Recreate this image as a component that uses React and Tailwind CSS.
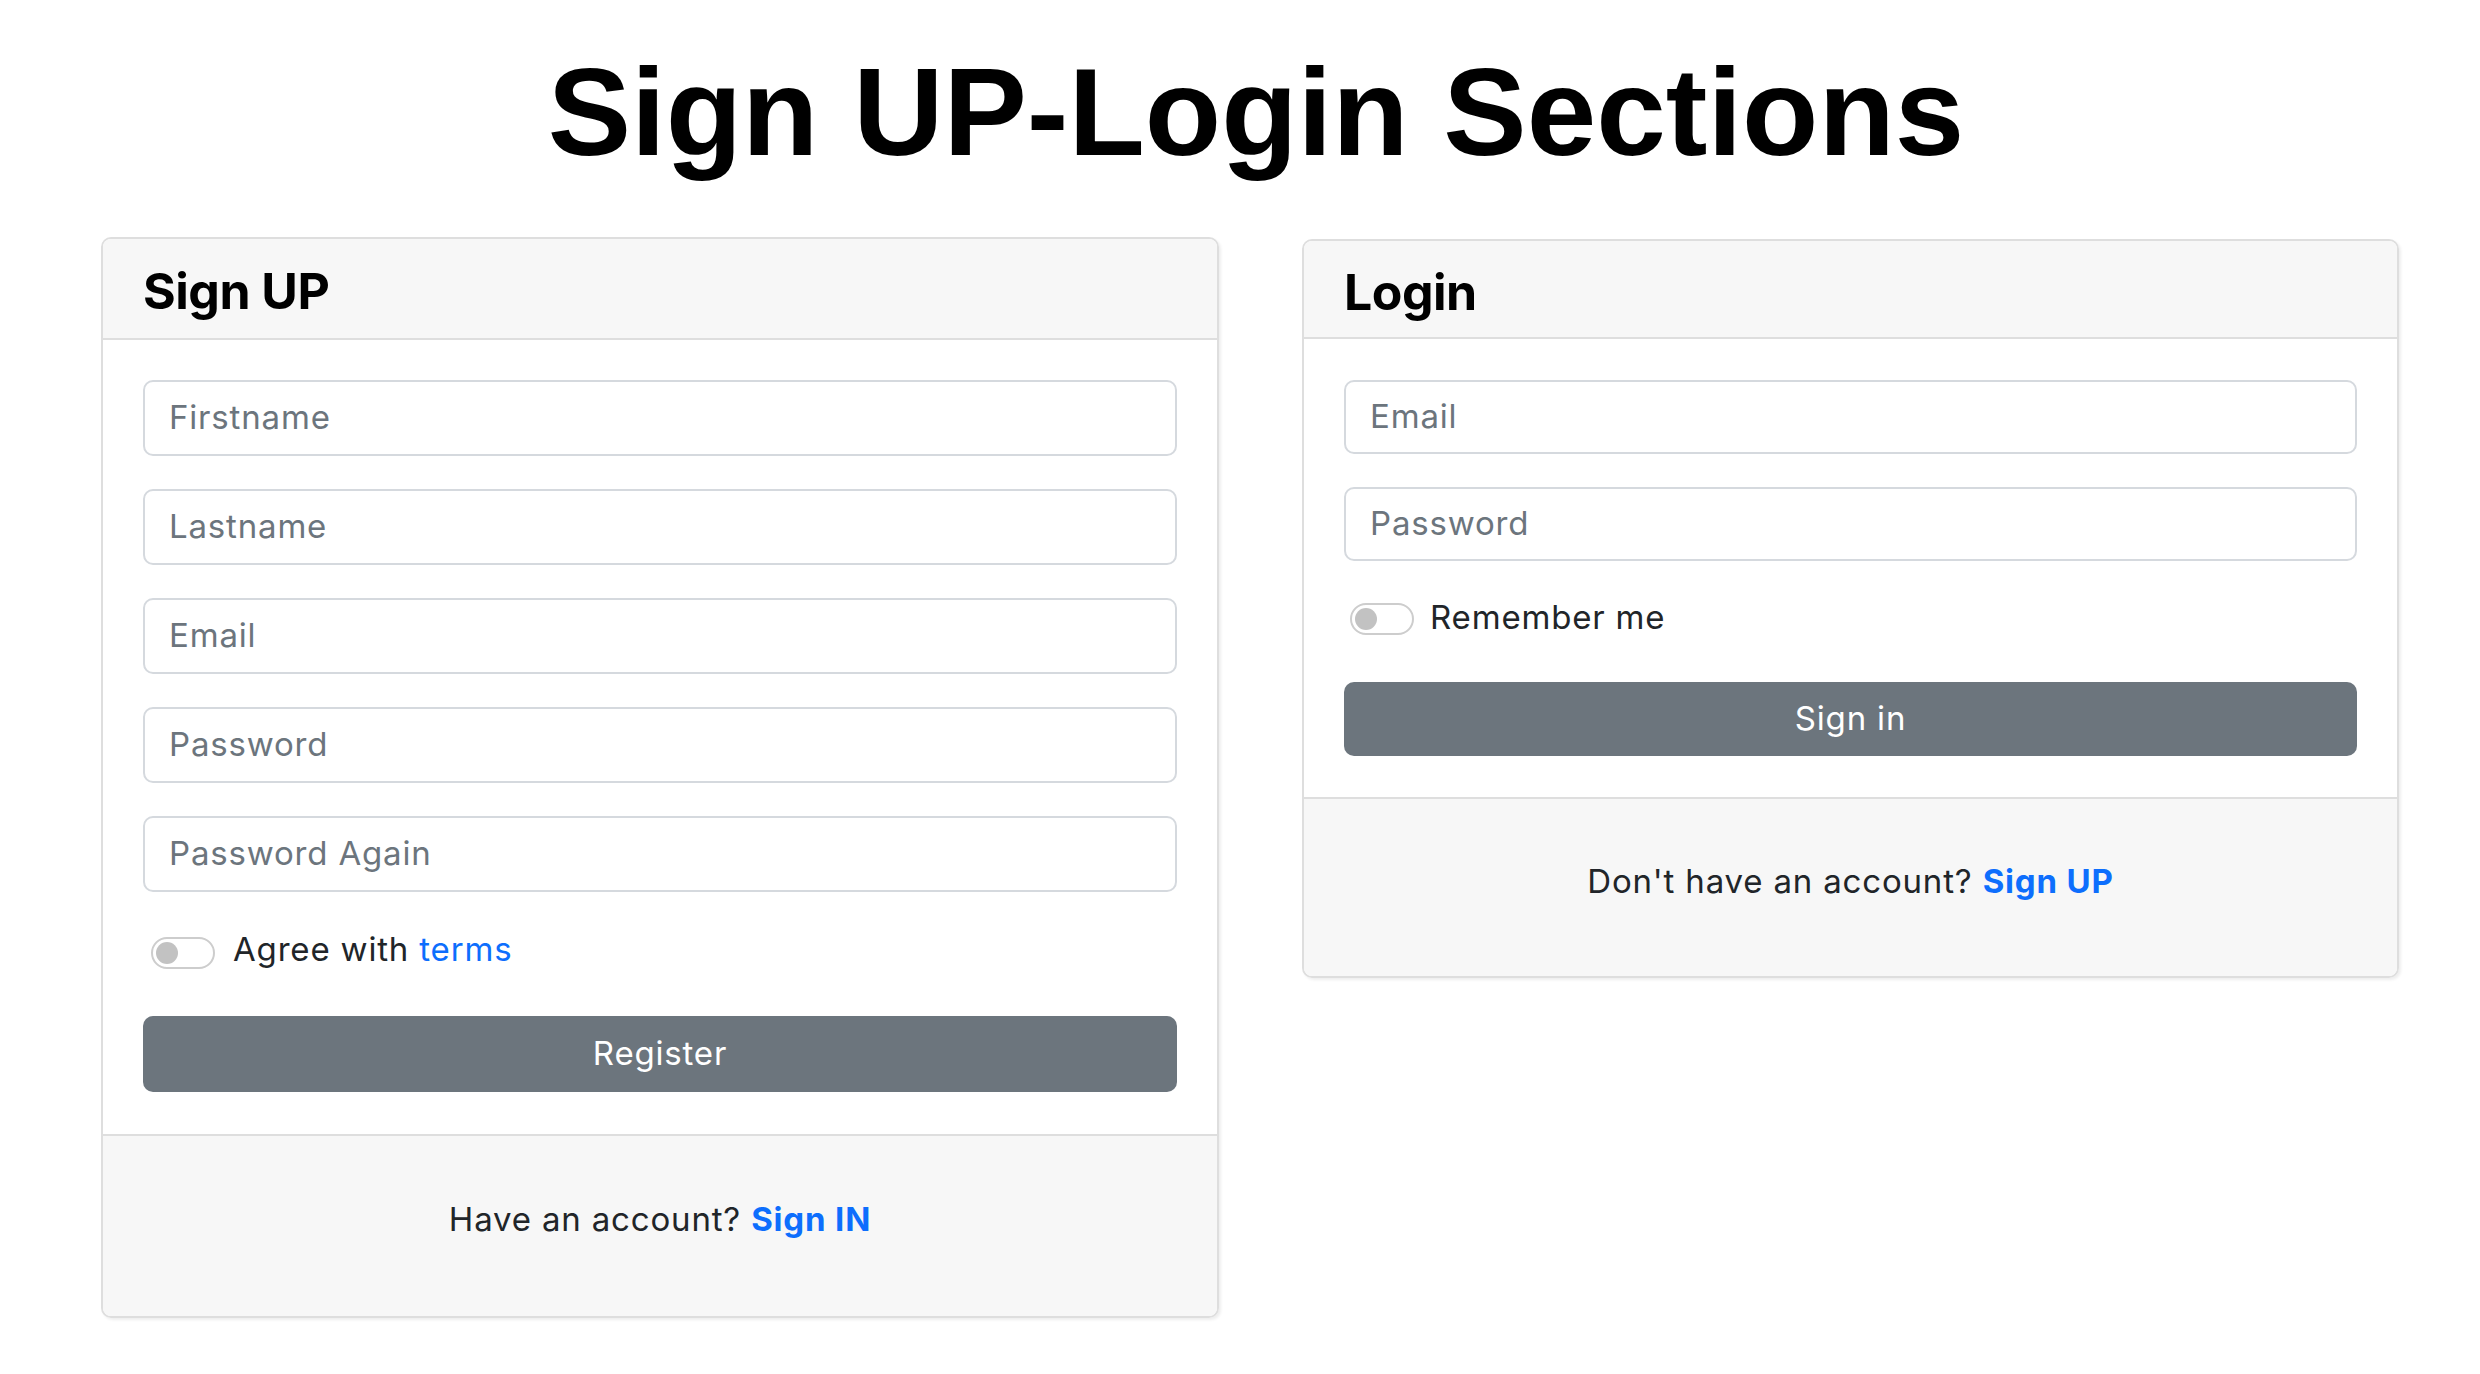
import React from "react";

const bodyFont = { fontFamily: "Inter, 'Open Sans', 'Noto Sans', sans-serif" };

function Field({ placeholder, h }) {
  return (
    <div
      className={`${h} w-full rounded-[10px] border-2 border-[#d5d9de] bg-white flex items-center pl-[24px] text-[33px] tracking-[0.025em] text-[#6c757d]`}
    >
      {placeholder}
    </div>
  );
}

function Toggle() {
  return (
    <span className="w-[64px] h-[32px] rounded-full border-2 border-[#cdcdcd] bg-white flex items-center shrink-0">
      <span className="ml-[3px] w-[22px] h-[22px] rounded-full bg-[#c2c2c2]" />
    </span>
  );
}

export default function App() {
  return (
    <div className="w-[2480px] h-[1374px] bg-white text-[#212529]" style={bodyFont}>
      <div className="pt-[49px] flex justify-center pl-[32px]">
        <h1
          className="text-[125px] leading-none font-bold text-black"
          style={{ fontFamily: "'Liberation Sans', Arial, sans-serif" }}
        >
          Sign UP-Login Sections
        </h1>
      </div>

      <div className="flex items-start pl-[101px] gap-[83px] mt-[63px]">
        {/* Sign UP card */}
        <div className="w-[1118px] rounded-[10px] border-2 border-[#dedede] shadow-[2px_2px_3px_rgba(0,0,0,0.07)] overflow-hidden">
          <div className="bg-[#f7f7f7] border-b-2 border-[#dedede] px-[40px] pt-[27px] pb-[21px]">
            <h3 className="text-[50px] leading-[51px] font-bold text-black tracking-[-0.5px]">Sign UP</h3>
          </div>
          <div className="bg-white px-[40px] pt-[40px] pb-[42px] flex flex-col">
            <div className="flex flex-col gap-[33px]">
              <Field placeholder="Firstname" h="h-[76px]" />
              <Field placeholder="Lastname" h="h-[76px]" />
              <Field placeholder="Email" h="h-[76px]" />
              <Field placeholder="Password" h="h-[76px]" />
              <Field placeholder="Password Again" h="h-[76px]" />
            </div>
            <div className="mt-[33px] h-[48px] flex items-start pl-[8px] gap-[18px]">
              <span className="mt-[12px]">
                <Toggle />
              </span>
              <span className="text-[33px] tracking-[0.025em] leading-[48px] text-[#212529]">
                Agree with <span className="text-[#0d6efd]">terms</span>
              </span>
            </div>
            <button className="mt-[43px] h-[76px] w-full rounded-[10px] bg-[#6c757d] text-white text-[33px] tracking-[0.025em]">
              Register
            </button>
          </div>
          <div className="bg-[#f7f7f7] border-t-2 border-[#dedede] pt-[59px] pb-[73px] text-center text-[33px] tracking-[0.025em] leading-[48px] text-[#212529]">
            Have an account? <span className="font-bold text-[#0d6efd]">Sign IN</span>
          </div>
        </div>

        {/* Login card */}
        <div className="mt-[2px] w-[1097px] rounded-[10px] border-2 border-[#dedede] shadow-[2px_2px_3px_rgba(0,0,0,0.07)] overflow-hidden">
          <div className="bg-[#f7f7f7] border-b-2 border-[#dedede] px-[40px] pt-[27px] pb-[21px]">
            <h3 className="text-[50px] leading-[48px] font-bold text-black tracking-[-0.5px]">Login</h3>
          </div>
          <div className="bg-white px-[40px] pt-[41px] pb-[41px] flex flex-col">
            <div className="flex flex-col gap-[33px]">
              <Field placeholder="Email" h="h-[74px]" />
              <Field placeholder="Password" h="h-[74px]" />
            </div>
            <div className="mt-[32px] h-[48px] flex items-start pl-[6px] gap-[16px]">
              <span className="mt-[10px]">
                <Toggle />
              </span>
              <span className="text-[33px] tracking-[0.025em] leading-[48px] text-[#212529]">Remember me</span>
            </div>
            <button className="mt-[41px] h-[74px] w-full rounded-[10px] bg-[#6c757d] text-white text-[33px] tracking-[0.025em]">
              Sign in
            </button>
          </div>
          <div className="bg-[#f7f7f7] border-t-2 border-[#dedede] pt-[58px] pb-[71px] text-center text-[33px] tracking-[0.025em] leading-[48px] text-[#212529]">
            Don't have an account? <span className="font-bold text-[#0d6efd]">Sign UP</span>
          </div>
        </div>
      </div>
    </div>
  );
}
